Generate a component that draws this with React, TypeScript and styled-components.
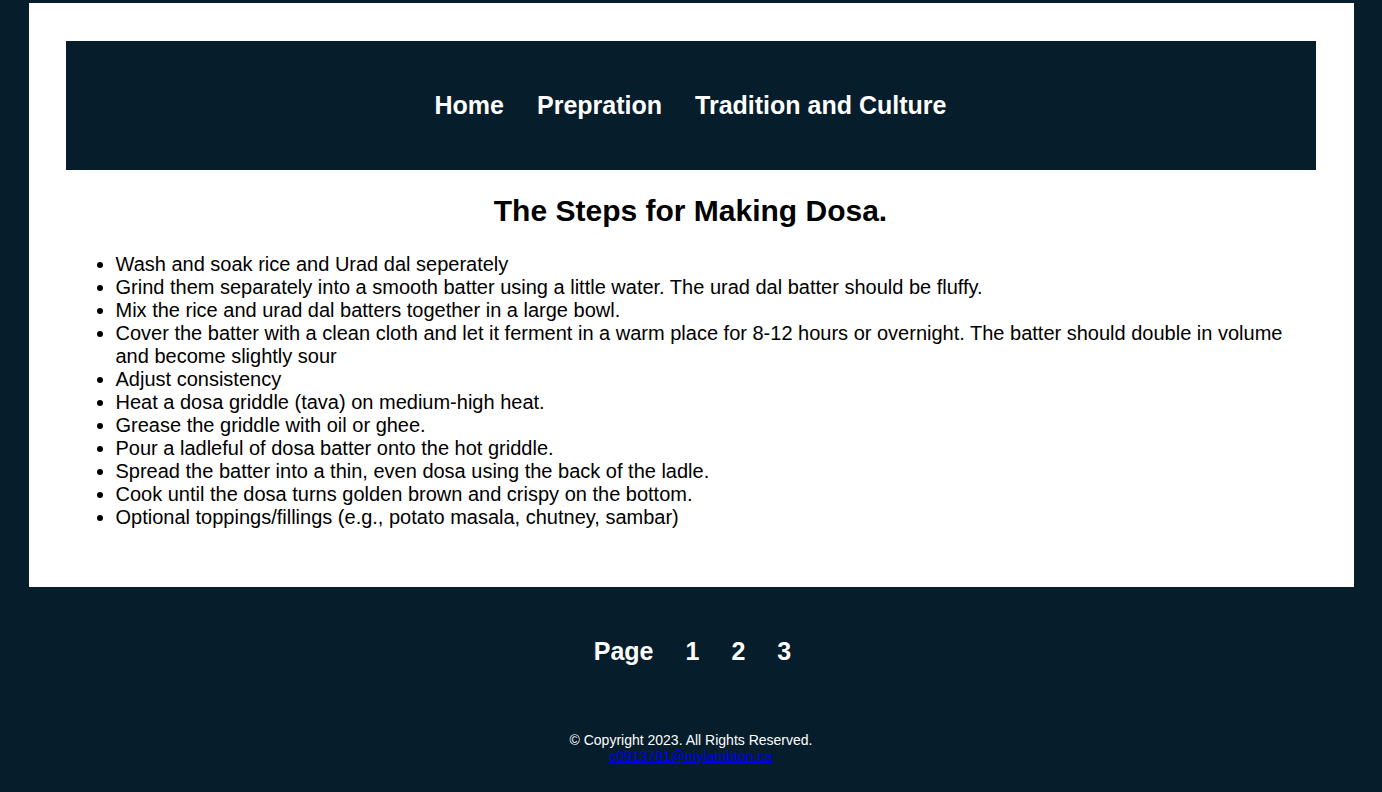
import React from "react";
import styled, { createGlobalStyle } from "styled-components";

const Global = createGlobalStyle`
  html, body { margin: 0; padding: 0; }
  body {
    background: #061d2b;
    font-family: "Liberation Sans", Arial, sans-serif;
  }
`;

const Container = styled.div`
  width: 1325px;
  margin: 3px auto 0;
  background: #ffffff;
  padding: 38px 38px 38px 37px;
  box-sizing: border-box;
`;

const Nav = styled.nav`
  background: #061d2b;
  height: 129px;
  display: flex;
  align-items: center;
  justify-content: center;
  gap: 33px;
`;

const NavLink = styled.a`
  color: #ffffff;
  font-size: 25px;
  font-weight: bold;
  text-decoration: none;
`;

const Title = styled.h2`
  margin: 24px 0 25px;
  text-align: center;
  font-size: 30px;
  font-weight: bold;
  color: #000;
`;

const Steps = styled.ul`
  margin: 0 22px 20px 10px;
  padding-left: 40px;
  font-size: 20px;
  line-height: 23px;
  color: #000;
`;

const Footer = styled.footer`
  padding-top: 50px;
  text-align: center;
`;

const Pager = styled.div`
  display: flex;
  justify-content: center;
  gap: 32px;
  padding-left: 3px;
`;

const PageItem = styled.a`
  color: #ffffff;
  font-size: 25px;
  font-weight: bold;
  text-decoration: none;
  line-height: 28px;
`;

const Copy = styled.p`
  margin: 67px 0 0;
  color: #ffffff;
  font-size: 14px;
  line-height: 16px;
`;

const Mail = styled.a`
  color: #0000ee;
  text-decoration: underline;
`;

const steps = [
  "Wash and soak rice and Urad dal seperately",
  "Grind them separately into a smooth batter using a little water. The urad dal batter should be fluffy.",
  "Mix the rice and urad dal batters together in a large bowl.",
  "Cover the batter with a clean cloth and let it ferment in a warm place for 8-12 hours or overnight. The batter should double in volume and become slightly sour",
  "Adjust consistency",
  "Heat a dosa griddle (tava) on medium-high heat.",
  "Grease the griddle with oil or ghee.",
  "Pour a ladleful of dosa batter onto the hot griddle.",
  "Spread the batter into a thin, even dosa using the back of the ladle.",
  "Cook until the dosa turns golden brown and crispy on the bottom.",
  "Optional toppings/fillings (e.g., potato masala, chutney, sambar)",
];

export default function App() {
  return (
    <>
      <Global />
      <Container>
        <Nav>
          <NavLink href="#">Home</NavLink>
          <NavLink href="#">Prepration</NavLink>
          <NavLink href="#">Tradition and Culture</NavLink>
        </Nav>
        <Title>The Steps for Making Dosa.</Title>
        <Steps>
          {steps.map((s) => (
            <li key={s}>{s}</li>
          ))}
        </Steps>
      </Container>
      <Footer>
        <Pager>
          <PageItem>Page</PageItem>
          <PageItem href="#">1</PageItem>
          <PageItem href="#">2</PageItem>
          <PageItem href="#">3</PageItem>
        </Pager>
        <Copy>
          © Copyright 2023. All Rights Reserved.
          <br />
          <Mail href="#">c0913781@mylambton.ca</Mail>
        </Copy>
      </Footer>
    </>
  );
}
